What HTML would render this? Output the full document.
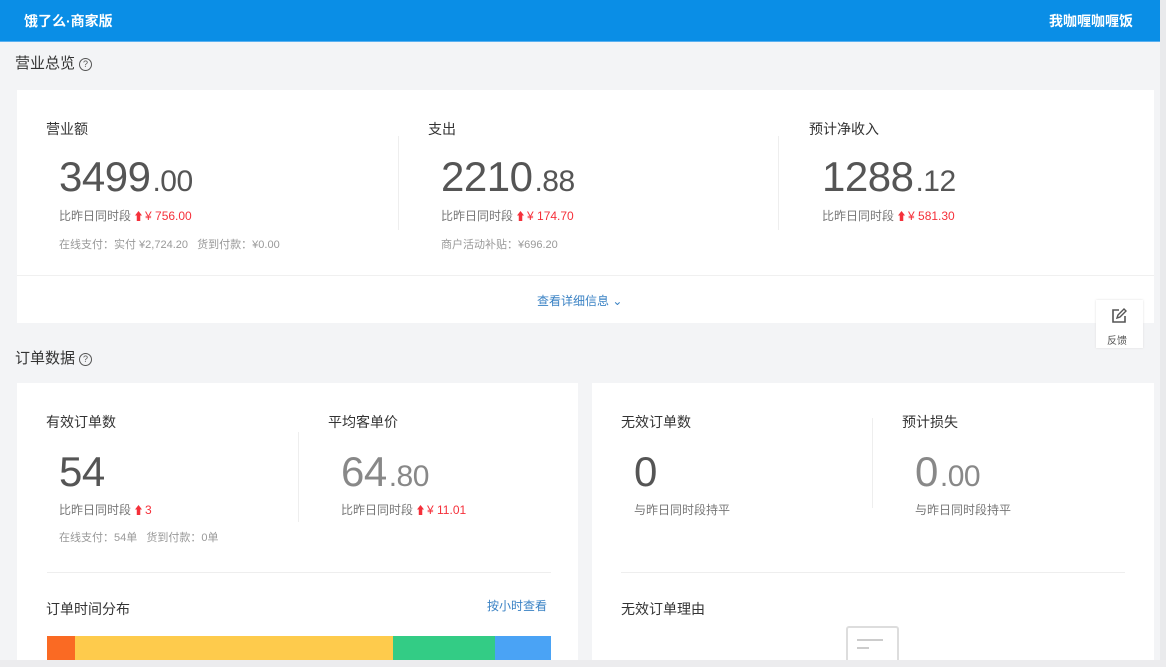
<!DOCTYPE html>
<html><head><meta charset="utf-8">
<style>
*{margin:0;padding:0;box-sizing:border-box}
body{width:1166px;height:667px;overflow:hidden;background:#f3f4f6;font-family:"Liberation Sans","Noto Sans CJK SC",sans-serif;position:relative;color:#333}
.a{position:absolute;white-space:nowrap}
.hdr{left:0;top:0;width:1162px;height:42px;background:#0a8ee6;border-bottom:1px solid #5ab0f0}
.sb{left:1160px;top:0;width:6px;height:667px;background:#e9eaec}
.card{background:#fff;position:absolute}
.sec{font-size:15px;color:#333}
.q{display:inline-block;width:13px;height:13px;border:1.3px solid #555;border-radius:50%;font-size:9px;text-align:center;line-height:11px;vertical-align:1px;margin-left:4px;color:#555}
.lab{font-size:14px;color:#333}
.big{font-size:42px;color:#555;letter-spacing:-0.5px}
.big small{font-size:30px;margin-left:2px}
.light{color:#888;font-weight:300}
.cmp{font-size:12px;color:#777}
.red{color:#f5303a}
.arr{display:inline-block;width:7px;height:10px;background:#f5303a;clip-path:polygon(50% 0,100% 45%,75% 45%,75% 100%,25% 100%,25% 45%,0 45%);vertical-align:-1px;margin:0 3px 0 4px}
.sm{font-size:11px;color:#999}
.vl{width:1px;background:#eee;position:absolute}
</style></head><body>
<div class="a hdr"></div>
<div class="a" style="left:24px;top:11px;font-size:14px;color:#fff;font-weight:bold">饿了么·商家版</div>
<div class="a" style="left:1049px;top:11px;font-size:14px;color:#fff;font-weight:bold">我咖喱咖喱饭</div>
<div class="a sb"></div>

<div class="a sec" style="left:15px;top:52px">营业总览<span class="q">?</span></div>
<div class="card" style="left:17px;top:90px;width:1137px;height:233px"></div>
<div class="a" style="left:17px;top:275px;width:1137px;height:1px;background:#f0f0f0"></div>
<div class="vl" style="left:398px;top:136px;height:94px"></div>
<div class="vl" style="left:778px;top:136px;height:94px"></div>

<div class="a lab" style="left:46px;top:119px">营业额</div>
<div class="a big" style="left:59px;top:153px">3499<small>.00</small></div>
<div class="a cmp" style="left:59px;top:207px">比昨日同时段<span class="arr"></span><span class="red">¥ 756.00</span></div>
<div class="a sm" style="left:59px;top:236px">在线支付：实付 ¥2,724.20 &nbsp; 货到付款：¥0.00</div>

<div class="a lab" style="left:428px;top:119px">支出</div>
<div class="a big" style="left:441px;top:153px">2210<small>.88</small></div>
<div class="a cmp" style="left:441px;top:207px">比昨日同时段<span class="arr"></span><span class="red">¥ 174.70</span></div>
<div class="a sm" style="left:441px;top:236px">商户活动补贴：¥696.20</div>

<div class="a lab" style="left:809px;top:119px">预计净收入</div>
<div class="a big" style="left:822px;top:153px">1288<small>.12</small></div>
<div class="a cmp" style="left:822px;top:207px">比昨日同时段<span class="arr"></span><span class="red">¥ 581.30</span></div>

<div class="a" style="left:537px;top:292px;font-size:12px;color:#3a82c4">查看详细信息 ⌄</div>

<div class="card" style="left:1096px;top:300px;width:47px;height:48px;box-shadow:0 0 2px #ddd"></div>
<svg class="a" style="left:1110px;top:307px" width="18" height="18" viewBox="0 0 18 18"><path d="M9 3H3v12h12V9" fill="none" stroke="#555" stroke-width="1.6"/><path d="M7 11l1-3 6-6 2 2-6 6z" fill="none" stroke="#555" stroke-width="1.4"/></svg>
<div class="a" style="left:1107px;top:332px;font-size:10px;color:#555">反馈</div>

<div class="a sec" style="left:15px;top:347px">订单数据<span class="q">?</span></div>
<div class="card" style="left:17px;top:383px;width:561px;height:277px"></div>
<div class="card" style="left:592px;top:383px;width:562px;height:277px"></div>
<div class="vl" style="left:298px;top:432px;height:90px"></div>
<div class="vl" style="left:872px;top:418px;height:90px"></div>

<div class="a lab" style="left:46px;top:412px">有效订单数</div>
<div class="a big" style="left:59px;top:448px">54</div>
<div class="a cmp" style="left:59px;top:501px">比昨日同时段<span class="arr"></span><span class="red">3</span></div>
<div class="a sm" style="left:59px;top:529px">在线支付：54单 &nbsp; 货到付款：0单</div>

<div class="a lab" style="left:328px;top:412px">平均客单价</div>
<div class="a big light" style="left:341px;top:448px">64<small>.80</small></div>
<div class="a cmp" style="left:341px;top:501px">比昨日同时段<span class="arr"></span><span class="red">¥ 11.01</span></div>

<div class="a" style="left:47px;top:572px;width:504px;height:1px;background:#eee"></div>
<div class="a lab" style="left:46px;top:599px">订单时间分布</div>
<div class="a" style="left:487px;top:597px;font-size:12px;color:#3a82c4">按小时查看</div>
<div class="a" style="left:47px;top:636px;width:28px;height:24px;background:#fa6a23"></div>
<div class="a" style="left:75px;top:636px;width:318px;height:24px;background:#fecb4c"></div>
<div class="a" style="left:393px;top:636px;width:102px;height:24px;background:#33cc85"></div>
<div class="a" style="left:495px;top:636px;width:56px;height:24px;background:#4aa3f5"></div>

<div class="a lab" style="left:621px;top:412px">无效订单数</div>
<div class="a big" style="left:634px;top:448px">0</div>
<div class="a cmp" style="left:634px;top:501px">与昨日同时段持平</div>
<div class="a lab" style="left:902px;top:412px">预计损失</div>
<div class="a big light" style="left:915px;top:448px">0<small>.00</small></div>
<div class="a cmp" style="left:915px;top:501px">与昨日同时段持平</div>

<div class="a" style="left:621px;top:572px;width:504px;height:1px;background:#eee"></div>
<div class="a lab" style="left:621px;top:599px">无效订单理由</div>
<div class="a" style="left:846px;top:626px;width:53px;height:40px;border:2px solid #ddd;border-radius:3px;background:#fff"></div>
<div class="a" style="left:857px;top:639px;width:26px;height:2px;background:#ccc"></div>
<div class="a" style="left:857px;top:647px;width:12px;height:2px;background:#ccc"></div>
<div class="a" style="left:0;top:660px;width:1166px;height:7px;background:#ececee"></div>
</body></html>
